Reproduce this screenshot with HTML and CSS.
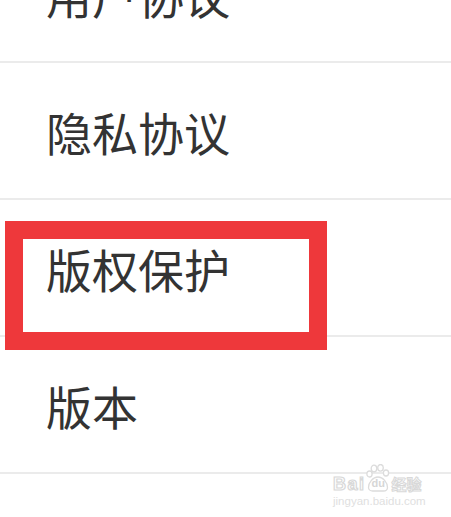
FILE: index.html
```html
<!DOCTYPE html>
<html lang="zh-CN">
<head>
  <meta charset="UTF-8">
  <meta name="viewport" content="width=device-width, initial-scale=1.0">
  <link rel="stylesheet" href="styles.css">
  <title>设置</title>
</head>
<body>
  <div class="settings">
    <ul class="menu">
      <li class="menu-item">用户协议</li>
      <li class="menu-item">隐私协议</li>
      <li class="menu-item">版权保护</li>
      <li class="menu-item">版本</li>
    </ul>

    <!-- annotation box over the highlighted row -->
    <div class="highlight"></div>

    <div class="watermark">
      <div class="wm-logo">
        <span class="wm-bai">Bai</span>
        <span class="wm-paw">
          <svg width="25" height="28" viewBox="0 0 25 28">
            <g fill="#fff" stroke="#dcdcdc" stroke-width="1.3">
              <ellipse cx="8" cy="4.5" rx="2.8" ry="3.3"/>
              <ellipse cx="14.5" cy="3.8" rx="2.8" ry="3.3"/>
              <ellipse cx="3.5" cy="10" rx="2.6" ry="3"/>
              <ellipse cx="20" cy="9" rx="2.6" ry="3"/>
              <path d="M2.5 23.5c0-5 4.5-10.5 9.5-10.5s9.5 5.5 9.5 10.5c0 2.2-2 3.5-4.2 3.5H6.7c-2.2 0-4.2-1.3-4.2-3.5z"/>
            </g>
          </svg>
          <span class="wm-du">du</span>
        </span>
        <span class="wm-jy">经验</span>
      </div>
      <div class="wm-url">jingyan.baidu.com</div>
    </div>
  </div>
</body>
</html>
```

FILE: styles.css
```css
body {
  margin: 0;
  background: #ffffff;
  font-family: "Noto Sans CJK SC", "Noto Sans", sans-serif;
  overflow: hidden;
}

.settings {
  position: relative;
  height: 517px;
  overflow: hidden;
}

.menu {
  list-style: none;
  margin: -74px 0 0 0;
  padding: 0;
}

.menu-item {
  display: flex;
  align-items: center;
  height: 135px;
  padding-left: 46px;
  border-bottom: 2px solid #ebebeb;
  font-size: 46px;
  color: #333333;
}

.highlight {
  position: absolute;
  left: 5px;
  top: 221px;
  width: 322px;
  height: 129px;
  box-sizing: border-box;
  border: 18px solid #ee383b;
}

.watermark {
  position: absolute;
  left: 333px;
  top: 463px;
  width: 92px;
}

.wm-logo {
  display: flex;
  align-items: flex-end;
  height: 29px;
}

.wm-bai {
  font-family: "Liberation Sans", Arial, sans-serif;
  font-weight: bold;
  font-size: 18px;
  line-height: 15px;
  letter-spacing: 1.5px;
  color: #fff;
  -webkit-text-stroke: 1.2px #d8d8d8;
}

.wm-paw {
  position: relative;
  width: 25px;
  height: 28px;
}

.wm-paw svg {
  display: block;
}

.wm-du {
  position: absolute;
  left: 6px;
  top: 13px;
  font-family: "Liberation Sans", Arial, sans-serif;
  font-size: 11px;
  font-weight: bold;
  color: #d6d6d6;
}

.wm-jy {
  font-size: 15px;
  line-height: 17px;
  font-weight: bold;
  color: #fff;
  -webkit-text-stroke: 1px #d8d8d8;
  margin-left: 1px;
}

.wm-url {
  margin-top: 3px;
  font-family: "Liberation Sans", Arial, sans-serif;
  font-size: 11.5px;
  line-height: 12px;
  color: #e0e0e0;
}
```
